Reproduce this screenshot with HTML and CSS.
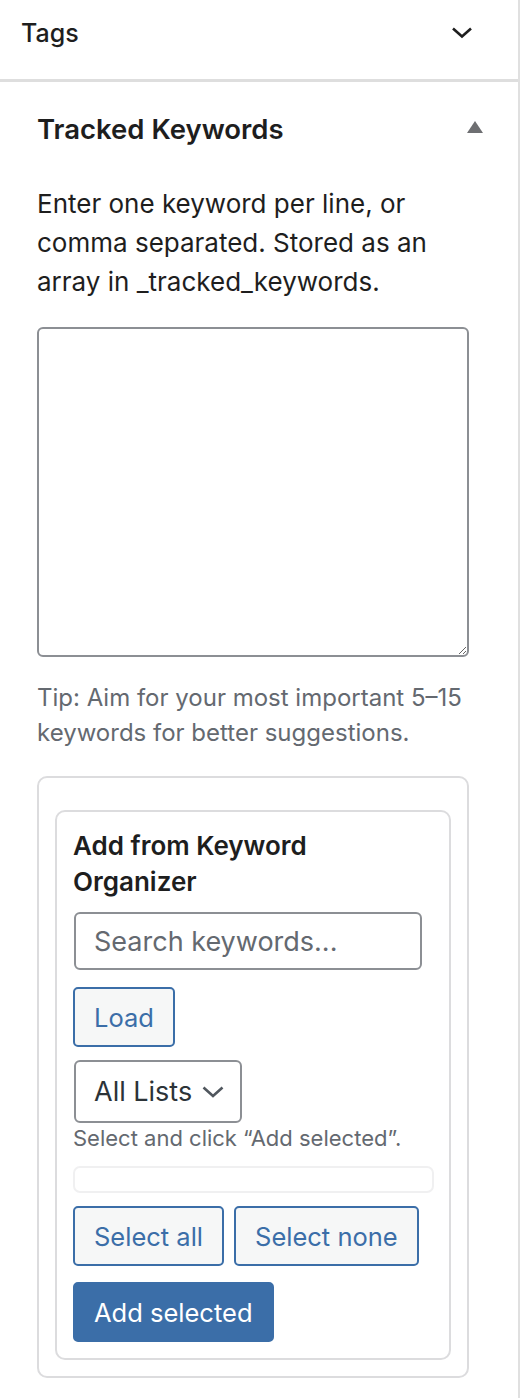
FILE: index.html
```html
<!DOCTYPE html>
<html lang="en">
<head>
<meta charset="utf-8">
<title>Tracked Keywords</title>
<link rel="stylesheet" href="styles.css">
</head>
<body>
<div class="sidebar">
  <section class="panel panel-closed">
    <div class="panel-toggle">
      <span class="panel-label">Tags</span>
      <svg class="chevron" width="22" height="12" viewBox="0 0 22 12"><path d="M2 1.5 L11 9.5 L20 1.5" fill="none" stroke="#1e1e1e" stroke-width="2.6"/></svg>
    </div>
  </section>
  <section class="panel panel-open">
    <div class="panel-head">
      <h2 class="panel-title">Tracked Keywords</h2>
      <svg class="caret" width="16" height="12" viewBox="0 0 16 12"><path d="M8 0 L16 12 L0 12 Z" fill="#6e6f72"/></svg>
    </div>
    <p class="help">Enter one keyword per line, or comma separated. Stored as an array in _tracked_keywords.</p>
    <textarea class="kw-area"></textarea>
    <p class="tip">Tip: Aim for your most important 5–15 keywords for better suggestions.</p>
    <div class="outer-box">
      <div class="organizer">
        <h3 class="org-title">Add from Keyword Organizer</h3>
        <input class="search" type="text" placeholder="Search keywords...">
        <div class="load-row"><button class="btn btn-secondary">Load</button></div>
        <div class="select">
          <span>All Lists</span>
          <svg width="22" height="12" viewBox="0 0 22 12"><path d="M1.5 1.5 L11 10 L20.5 1.5" fill="none" stroke="#50575e" stroke-width="2.6"/></svg>
        </div>
        <p class="hint">Select and click “Add selected”.</p>
        <div class="results"></div>
        <div class="btn-row">
          <button class="btn btn-secondary">Select all</button>
          <button class="btn btn-secondary">Select none</button>
        </div>
        <div class="add-row"><button class="btn btn-primary">Add selected</button></div>
      </div>
    </div>
  </section>
</div>
</body>
</html>
```

FILE: styles.css
```css
* { box-sizing: border-box; }
html, body { margin: 0; padding: 0; background: #fff; }
body {
  font-family: Inter, "Liberation Sans", sans-serif;
  color: #1e1e1e;
}
.sidebar {
  width: 520px;
  min-height: 1398px;
  border-right: 2px solid #e0e0e0;
}
.panel-closed {
  border-bottom: 3px solid #dedede;
  padding-bottom: 13px;
}
.panel-toggle {
  height: 66px;
  padding: 0 45px 0 21px;
  display: flex;
  align-items: center;
  justify-content: space-between;
}
.panel-label {
  font-size: 25px;
  font-weight: 500;
}
.panel-open {
  padding: 31px 35px 0 37px;
}
.panel-head {
  display: flex;
  align-items: center;
  justify-content: space-between;
  height: 32px;
}
.panel-title {
  margin: 0;
  font-size: 27.5px;
  font-weight: 600;
  line-height: 32px;
}
.caret { margin-top: -4px; }
.help {
  margin: 39px 0 0;
  width: 432px;
  font-size: 26px;
  line-height: 39px;
}
.kw-area {
  display: block;
  margin-top: 26px;
  width: 432px;
  height: 330px;
  border: 2px solid #8c8f94;
  border-radius: 6px;
  resize: vertical;
}
.tip {
  margin: 23px 0 0;
  width: 432px;
  font-size: 24px;
  line-height: 35px;
  color: #646970;
}
.outer-box {
  margin-top: 26px;
  width: 432px;
  border: 2px solid #dcdcde;
  border-radius: 10px;
  padding: 32px 16px 16px;
}
.organizer {
  border: 2px solid #dcdcde;
  border-radius: 10px;
  padding: 16px;
}
.org-title {
  margin: 0;
  max-width: 340px;
  font-size: 26px;
  font-weight: 600;
  line-height: 36px;
}
.search {
  display: block;
  margin: 12px 0 0 1px;
  width: 348px;
  height: 58px;
  border: 2px solid #8c8f94;
  border-radius: 6px;
  padding: 0 18px;
  font-family: inherit;
  font-size: 27px;
  color: #2c3338;
}
.search::placeholder { color: #646970; }
.btn {
  font-family: inherit;
  height: 60px;
  border-radius: 5px;
  padding: 0 19px;
  font-size: 25.5px;
  cursor: pointer;
}
.btn-secondary {
  border: 2px solid #3b6ea8;
  background: #f6f7f7;
  color: #3b6ea8;
}
.btn-primary {
  border: 2px solid #3b6ea8;
  background: #3b6ea8;
  color: #fff;
}
.load-row { margin-top: 17px; }
.btn-row {
  margin-top: 13px;
  display: flex;
  gap: 10px;
}
.add-row { margin-top: 16px; }
.select {
  margin: 13px 0 0 1px;
  width: 168px;
  height: 63px;
  border: 2px solid #8c8f94;
  border-radius: 6px;
  padding: 0 16px 0 18px;
  display: flex;
  align-items: center;
  justify-content: space-between;
  font-size: 27px;
  color: #2c3338;
}
.hint {
  margin: 0;
  font-size: 22px;
  line-height: 30px;
  color: #646970;
}
.results {
  margin-top: 13px;
  width: 361px;
  height: 27px;
  border: 2px solid #f0f0f1;
  border-radius: 7px;
}
```
